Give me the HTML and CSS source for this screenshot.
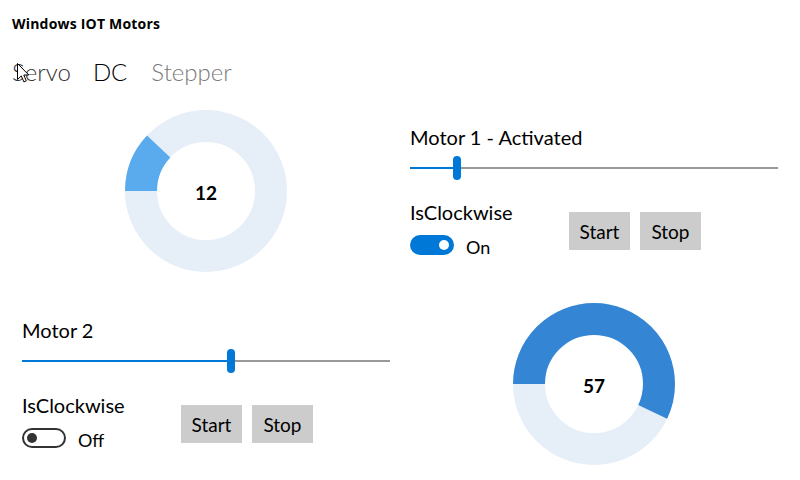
FILE: index.html
```html
<!DOCTYPE html>
<html lang="en">
<head>
<meta charset="utf-8">
<title>Windows IOT Motors</title>
<link rel="stylesheet" href="styles.css">
</head>
<body>
<div class="app">
  <div class="title">Windows IOT Motors</div>
  <nav class="pivot">
    <span class="tab tab-servo">Servo</span>
    <span class="tab tab-dc">DC</span>
    <span class="tab tab-stepper">Stepper</span>
  </nav>
  <div class="grid">
    <div class="cell gauge-cell">
      <div class="gauge">
        <svg class="gauge-svg" width="162" height="162" viewBox="0 0 162 162">
          <circle class="gauge-track" cx="81" cy="81" r="65"/>
          <circle class="gauge-bar gauge-bar-1" cx="81" cy="81" r="65" stroke-dasharray="49.01 408.41" transform="rotate(180 81 81)"/>
        </svg>
        <span class="gauge-value">12</span>
      </div>
    </div>
    <div class="cell">
      <div class="motor">
        <div class="motor-label">Motor 1 - Activated</div>
        <div class="slider">
          <div class="slider-fill" style="width:43.2px"></div>
          <div class="slider-thumb"></div>
          <div class="slider-rest"></div>
        </div>
        <div class="controls">
          <div class="toggle-group">
            <div class="toggle-header">IsClockwise</div>
            <div class="toggle-row">
              <div class="toggle toggle-on"><span class="knob"></span></div>
              <span class="toggle-label">On</span>
            </div>
          </div>
          <div class="buttons">
            <button class="btn">Start</button>
            <button class="btn">Stop</button>
          </div>
        </div>
      </div>
    </div>
    <div class="cell">
      <div class="motor">
        <div class="motor-label">Motor 2</div>
        <div class="slider">
          <div class="slider-fill" style="width:205.2px"></div>
          <div class="slider-thumb"></div>
          <div class="slider-rest"></div>
        </div>
        <div class="controls">
          <div class="toggle-group">
            <div class="toggle-header">IsClockwise</div>
            <div class="toggle-row">
              <div class="toggle toggle-off"><span class="knob"></span></div>
              <span class="toggle-label">Off</span>
            </div>
          </div>
          <div class="buttons">
            <button class="btn">Start</button>
            <button class="btn">Stop</button>
          </div>
        </div>
      </div>
    </div>
    <div class="cell gauge-cell">
      <div class="gauge">
        <svg class="gauge-svg" width="162" height="162" viewBox="0 0 162 162">
          <circle class="gauge-track" cx="81" cy="81" r="65"/>
          <circle class="gauge-bar gauge-bar-2" cx="81" cy="81" r="65" stroke-dasharray="232.79 408.41" transform="rotate(180 81 81)"/>
        </svg>
        <span class="gauge-value">57</span>
      </div>
    </div>
  </div>
  <svg class="cursor" width="13" height="20" viewBox="0 0 13 20">
    <path d="M0.5 0.5 L0.5 16.5 L4.3 12.9 L6.9 18.9 L9.3 17.9 L6.8 12 L11.8 12 Z" fill="#fff" stroke="#000" stroke-width="1" stroke-linejoin="miter"/>
  </svg>
</div>
</body>
</html>
```

FILE: styles.css
```css
html, body {
  margin: 0;
  padding: 0;
  background: #ffffff;
}

body {
  font-family: "Lato", "Open Sans", sans-serif;
  color: #000000;
}

.app {
  position: relative;
  width: 800px;
  height: 480px;
  overflow: hidden;
}

.title {
  padding: 15px 0 0 12px;
  font-family: "Open Sans", "Lato", sans-serif;
  font-size: 14px;
  line-height: 18px;
  font-weight: 700;
  letter-spacing: 0.2px;
}

.pivot {
  display: flex;
  gap: 22px;
  margin-top: 23px;
  padding-left: 12px;
  font-size: 24px;
  line-height: 32px;
  font-weight: 300;
}

.tab-servo { color: #333333; }
.tab-dc { color: #000000; }
.tab-stepper { color: #7a7a7a; margin-left: 2px; }

.grid {
  display: grid;
  grid-template-columns: 388px 388px;
  grid-template-rows: 193px 193px;
  margin-top: 6px;
  margin-left: 12px;
}

.gauge-cell {
  display: flex;
  align-items: center;
  justify-content: center;
}

.gauge {
  position: relative;
  width: 162px;
  height: 162px;
}

.gauge-svg {
  display: block;
}

.gauge-track {
  fill: none;
  stroke: #e6eef8;
  stroke-width: 32;
}

.gauge-bar {
  fill: none;
  stroke-width: 32;
}

.gauge-bar-1 { stroke: #5aabee; }
.gauge-bar-2 { stroke: #3585d5; }

.gauge-value {
  position: absolute;
  inset: 0;
  display: flex;
  align-items: center;
  justify-content: center;
  padding-top: 3px;
  font-size: 19px;
  font-weight: 700;
}

.motor {
  padding: 29px 10px 0 10px;
}

.motor-label {
  font-size: 20px;
  line-height: 28px;
}

.slider {
  display: flex;
  align-items: center;
  height: 24px;
  margin-top: 5px;
}

.slider-fill {
  height: 2px;
  background: #0078d7;
}

.slider-thumb {
  width: 8px;
  height: 24px;
  border-radius: 4px;
  background: #0078d7;
}

.slider-rest {
  flex: 1;
  height: 2px;
  background: #999999;
}

.controls {
  display: flex;
  align-items: flex-start;
  margin-top: 18px;
}

.toggle-group {
  width: 159px;
}

.toggle-header {
  font-size: 20px;
  line-height: 28px;
}

.toggle-row {
  display: flex;
  align-items: flex-start;
  gap: 12px;
  margin-top: 9px;
}

.toggle {
  box-sizing: border-box;
  width: 44px;
  height: 20px;
  border-radius: 10px;
  display: flex;
  align-items: center;
  padding: 0 5px;
}

.toggle-on {
  background: #0078d7;
  justify-content: flex-end;
}

.toggle-off {
  border: 2px solid #333333;
  padding: 0 3px;
  justify-content: flex-start;
}

.knob {
  width: 10px;
  height: 10px;
  border-radius: 50%;
}

.toggle-on .knob { background: #ffffff; }
.toggle-off .knob { background: #333333; }

.toggle-label {
  font-size: 18px;
  line-height: 20px;
  margin-top: 2px;
}

.buttons {
  display: flex;
  gap: 10px;
  margin-top: 14px;
}

.btn {
  width: 61px;
  height: 38px;
  border: none;
  padding: 0;
  background: #cccccc;
  color: #000000;
  font-family: "Lato", "Open Sans", sans-serif;
  font-size: 19px;
}

.cursor {
  position: absolute;
  left: 17px;
  top: 63px;
}
```
